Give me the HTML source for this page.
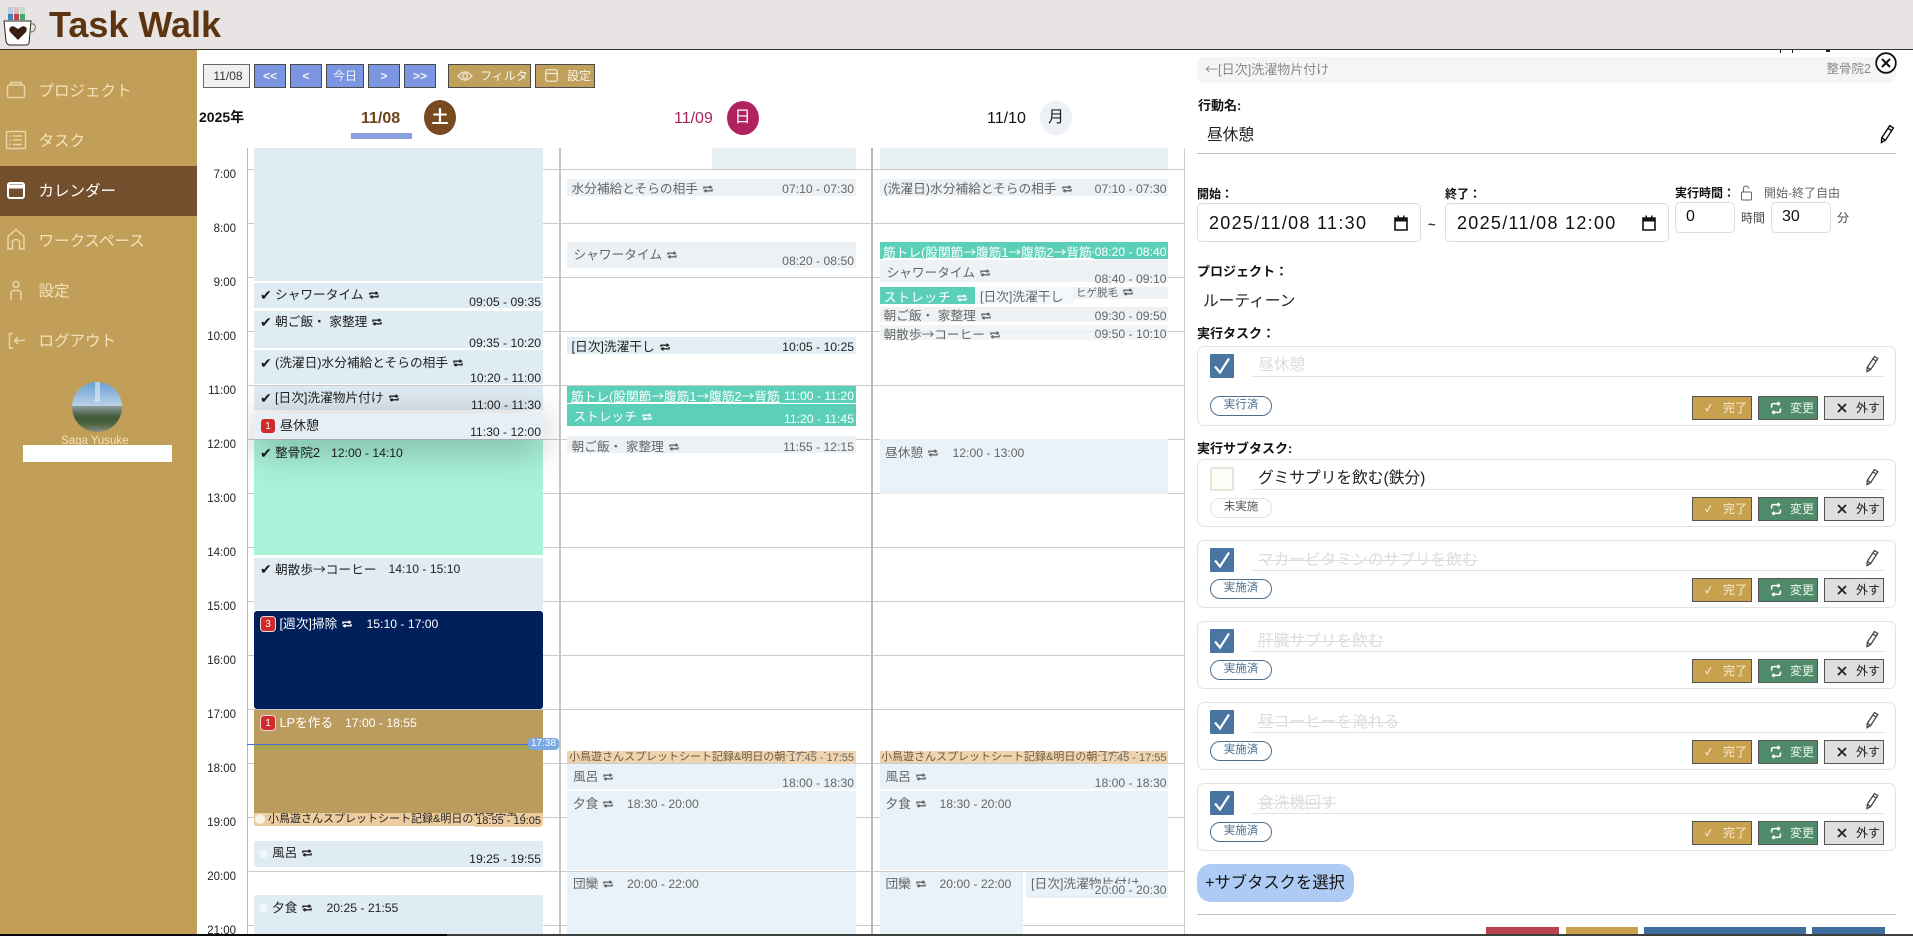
<!DOCTYPE html>
<html lang="ja"><head><meta charset="utf-8"><title>Task Walk</title>
<style>
*{box-sizing:border-box}
html,body{margin:0;padding:0;width:1913px;height:936px;overflow:hidden;background:#fff}
body{position:relative;font-family:"Liberation Sans","Noto Sans CJK JP",sans-serif;color:#222}
.a{position:absolute;white-space:nowrap;line-height:16px}
.b{position:absolute}
.j{font-family:"Noto Sans CJK JP",sans-serif}
.l{position:absolute;left:248px;width:936px;height:1px;background:#cbcbcb}
.h{position:absolute;right:1677px;font-size:11.5px;line-height:16px;color:#222}
.e{position:absolute}
.t{position:absolute;white-space:nowrap;line-height:16px;font-size:12.7px}
.c{position:absolute;white-space:nowrap;line-height:16px;font-size:14px;left:260px;color:#1a1a1a}
.m{position:absolute;white-space:nowrap;line-height:16px;font-size:12.2px}
.d2{color:#666}.d3{color:#666}
.r{width:10px;height:8px;margin-left:5px;vertical-align:0}
.nav{position:absolute;left:0;width:197px;height:50px}
.nav span{position:absolute;left:38.500px;top:16px;font-size:15.5px;line-height:20px;color:#f3e3bb;white-space:nowrap}
.nav svg{position:absolute;left:5px;top:9px;width:22px;height:32px;fill:none;stroke:#e9d6a8;stroke-width:1.5}
.tb{position:absolute;top:64px;height:24px;border:1px solid #4a4a4a;font-size:12px;line-height:22px;text-align:center;color:#f4f4f4;background:#7b95e1}
.tb.g{background:#c0a05a}
.lb{position:absolute;white-space:nowrap;font-weight:700;line-height:16px;color:#111}
.inp{position:absolute;border:1px solid #dcdcdc;border-radius:5px;background:#fff}
.dt{position:absolute;left:11px;top:8px;font-size:18px;letter-spacing:1.3px;line-height:22px;color:#111;white-space:nowrap}
.card{position:absolute;left:1197px;width:699px;height:68px;border:1px solid #e3e3e3;border-radius:7px;background:#fff}
.chk{position:absolute;left:12px;top:7px;width:24px;height:24px;background:#4a75a3;border-radius:1px}
.chk svg{position:absolute;left:0;top:0;width:24px;height:24px}
.chk.o{background:#fdfdf8;border:2px solid #e7e4d8}
.nm{position:absolute;left:60px;top:10px;font-size:15.7px;line-height:20px;color:#dcdcdc;white-space:nowrap;text-decoration:line-through}
.ul{position:absolute;left:54px;top:29px;width:632px;height:1px;background:#e2e2e2}
.pn{position:absolute;left:667px;top:8px;width:14px;height:18px;color:#444}
.pill{position:absolute;left:12px;top:38px;width:62px;height:20px;border:1px solid #4e6f8c;border-radius:10px;font-size:11.5px;line-height:17px;text-align:center;color:#4a7090;background:#fff}
.pill.o{border-color:#e2e2e2;color:#555}
.btn{position:absolute;top:37px;width:60px;height:24px;border:1px solid #555;font-size:12px;line-height:22px}
.btn i{position:absolute;font-style:normal;white-space:nowrap}
.bc{left:494px;background:#c8a14f;color:#f8ecd0}
.bh{left:560px;background:#4f8a69;color:#eaf5ee;width:60px}
.bx{left:626px;background:#dedede;color:#222}
.badge{position:absolute;width:16px;height:16px;border-radius:4px;background:#d12a2a;border:1px solid #f5d5d5;color:#fff;font-size:10px;line-height:15px;text-align:center}
</style></head><body>
<svg width="0" height="0" style="position:absolute"><defs>
<symbol id="rep" viewBox="0 0 11 8"><path d="M1 4.200V2h8M7.200.4 9.400 2 7.200 3.600M10 3.800V6H2M3.800 4.400 1.600 6l2.200 1.600" fill="none" stroke="currentColor" stroke-width="1.400"/></symbol>
<symbol id="pen" viewBox="0 0 14 18"><path d="M9.500 1.500 12.800 3.600 5.600 14.600 2 16.600 2.300 12.400ZM8 4 11.200 6M2.300 12.400 5.600 14.600" fill="none" stroke="currentColor" stroke-width="1.300"/></symbol>
<symbol id="ck" viewBox="0 0 24 24"><path d="M5 12.500 10 18.500 19 4.500" fill="none" stroke="#fff" stroke-width="2.200"/></symbol>
<symbol id="cal" viewBox="0 0 14 16"><path d="M1 3h12v12H1z" fill="none" stroke="#111" stroke-width="1.600"/><path d="M1 3h12v3.500H1zM3.500 0.500h1.500V3H3.500zM9 0.500h1.500V3H9z" fill="#111"/></symbol>
<symbol id="sy" viewBox="0 0 16 16"><path d="M3 7.500V5Q3 3 5 3h6M10 1l2 2-2 2" fill="none" stroke="#fff" stroke-width="1.800"/><path d="M13 8.500V11Q13 13 11 13H5M6 15l-2-2 2-2" fill="none" stroke="#fff" stroke-width="1.800"/></symbol>
<symbol id="x" viewBox="0 0 12 12"><path d="M2 2l8 8M10 2l-8 8" fill="none" stroke="#222" stroke-width="1.800"/></symbol>
</defs></svg>

<!-- header -->
<div class="b" style="left:0;top:0;width:1913px;height:49px;background:#e8e4e4"></div>
<div class="b" style="left:0;top:49px;width:1913px;height:1px;background:#3b3530"></div>
<svg class="b" style="left:0;top:3px" width="42" height="44" viewBox="0 0 42 44">
<rect x="8" y="4" width="5" height="8" fill="#b7cfe0"/><rect x="14" y="4" width="5" height="8" fill="#e4bcc0"/><rect x="20" y="4" width="5" height="8" fill="#bfe0cc"/>
<rect x="8" y="11" width="5" height="6" fill="#3f86bb"/><rect x="14" y="11" width="5" height="6" fill="#c9404d"/><rect x="20" y="11" width="5" height="6" fill="#48a878"/>
<path d="M4 18H31L29 40Q28.500 42 26 42H10Q7 42 6 38Z" fill="#fff" stroke="#2d2620" stroke-width="1"/>
<path d="M31 21h3q2 2 1 5t-5 3" fill="none" stroke="#8a8278" stroke-width="1.200"/>
<path d="M18 37 10 29C8 25.500 11 22.500 14 23.500L18 26 22 23.500C25.500 22.500 28 25.500 26 29Z" fill="#3a2012"/>
</svg>
<div class="a" style="left:49px;top:4px;font-size:36px;line-height:42px;font-weight:700;color:#5c3410">Task Walk</div>

<!-- sidebar -->
<div class="b" style="left:0;top:50px;width:197px;height:886px;background:#c19f58"></div>
<div class="b" style="left:0;top:166px;width:197px;height:50px;background:#744f2e"></div>
<div class="nav" style="top:66px"><svg viewBox="0 0 22 32"><rect x="2.500" y="10" width="17" height="12.500" rx="2"/><path d="M6 10V7.500h10V10"/></svg><span>プロジェクト</span></div>
<div class="nav" style="top:116px"><svg viewBox="0 0 22 32"><rect x="1.500" y="6.500" width="19" height="17" rx="1.500"/><path d="M8 11h9M8 15h9M8 19.500h9M4.500 11h1.500M4.500 15h1.500M4.500 19.500h1.500"/></svg><span>タスク</span></div>
<div class="nav" style="top:166px"><svg viewBox="0 0 22 32" style="stroke:#fff;stroke-width:2"><rect x="3" y="8" width="16" height="15" rx="2"/><path d="M3 11.500h16" stroke-width="4"/></svg><span style="color:#fff">カレンダー</span></div>
<div class="nav" style="top:216px"><svg viewBox="0 0 22 32"><path d="M3 24V11.500L11 4.500 19 11.500V24H14.500V17.500Q14.500 14.500 11 14.500T7.500 17.500V24Z"/></svg><span>ワークスペース</span></div>
<div class="nav" style="top:266px"><svg viewBox="0 0 22 32"><circle cx="11" cy="9.500" r="3"/><path d="M6 25V18Q6 15.500 8.500 15.500h5Q16 15.500 16 18V25"/></svg><span>設定</span></div>
<div class="nav" style="top:316px"><svg viewBox="0 0 22 32"><path d="M8 8.500H4.500V23H8M20 15.500H9.500M13 12l-3.500 3.500L13 19"/></svg><span>ログアウト</span></div>
<svg class="b" style="left:72px;top:382px" width="50" height="50" viewBox="0 0 50 50">
<defs><clipPath id="av"><ellipse cx="25" cy="25" rx="25" ry="25"/></clipPath><linearGradient id="sk" x1="0" y1="0" x2="0" y2="1"><stop offset="0" stop-color="#6aa0d2"/><stop offset="1" stop-color="#c7dcec"/></linearGradient>
<linearGradient id="gr" x1="0" y1="0" x2="0" y2="1"><stop offset="0" stop-color="#8d9aa0"/><stop offset=".22" stop-color="#66786a"/><stop offset=".45" stop-color="#3d5a33"/><stop offset=".7" stop-color="#4e6440"/><stop offset="1" stop-color="#8a8f80"/></linearGradient></defs>
<g clip-path="url(#av)"><rect width="50" height="28" fill="url(#sk)"/><rect x="23" y="0" width="5" height="20" fill="#e6eef5" opacity=".6"/><rect y="24" width="50" height="26" fill="url(#gr)"/></g></svg>
<div class="a" style="left:61px;top:433px;font-size:11.5px;color:#f3e3bb">Saga Yusuke</div>
<div class="b" style="left:23px;top:445px;width:149px;height:17px;background:#fff"></div>

<!-- toolbar -->
<div class="tb" style="left:203px;width:47px;background:#f0f0f0;color:#333;padding-left:3px;border-color:#666">11/08</div>
<div class="tb" style="left:254px;width:32px;font-weight:700">&lt;&lt;</div>
<div class="tb" style="left:290px;width:32px;font-weight:700">&lt;</div>
<div class="tb" style="left:326px;width:38px">今日</div>
<div class="tb" style="left:368px;width:32px;font-weight:700">&gt;</div>
<div class="tb" style="left:404px;width:32px;font-weight:700">&gt;&gt;</div>
<div class="tb g" style="left:448px;width:83px;text-align:left;padding-left:31px"><svg class="b" style="left:8px;top:4px" width="16" height="14" viewBox="0 0 16 14"><path d="M1 7Q8 -1 15 7 8 15 1 7Z" fill="none" stroke="#f4efe0" stroke-width="1.200"/><circle cx="8" cy="7" r="2.300" fill="none" stroke="#f4efe0" stroke-width="1.200"/></svg>フィルタ</div>
<div class="tb g" style="left:535px;width:60px;text-align:left;padding-left:31px"><svg class="b" style="left:9px;top:4px" width="13" height="13" viewBox="0 0 13 13"><rect x=".8" y=".8" width="11.400" height="11.400" rx="1.500" fill="none" stroke="#f4efe0" stroke-width="1.200"/><path d="M1 4.500h11" stroke="#f4efe0" stroke-width="1.200"/></svg>設定</div>

<div class="a" style="left:199px;top:109px;font-size:14px;font-weight:700;color:#111">2025年</div>
<div class="a" style="left:361px;top:111px;font-size:16px;font-weight:700;color:#6a4418">11/08</div>
<div class="b" style="left:351px;top:133px;width:61px;height:6px;background:#8aa0de"></div>
<div class="b" style="left:424px;top:100px;width:32px;height:35px;border-radius:50%;background:#774a1f;color:#fff;font-size:17px;font-weight:700;line-height:35px;text-align:center">土</div>
<div class="a" style="left:674px;top:111px;font-size:16px;color:#a8235f">11/09</div>
<div class="b" style="left:726.500px;top:101px;width:32px;height:34px;border-radius:50%;background:#b0235f;color:#fff;font-size:16px;line-height:34px;text-align:center">日</div>
<div class="a" style="left:987px;top:111px;font-size:16px;color:#111">11/10</div>
<div class="b" style="left:1040px;top:101px;width:32px;height:34px;border-radius:50%;background:#eef0f7;color:#222;font-size:16px;line-height:34px;text-align:center">月</div>

<!-- grid -->
<div class="l" style="top:169px"></div><div class="l" style="top:223px"></div><div class="l" style="top:277px"></div><div class="l" style="top:331px"></div><div class="l" style="top:385px"></div><div class="l" style="top:439px"></div><div class="l" style="top:493px"></div><div class="l" style="top:547px"></div><div class="l" style="top:601px"></div><div class="l" style="top:655px"></div><div class="l" style="top:709px"></div><div class="l" style="top:763px"></div><div class="l" style="top:817px"></div><div class="l" style="top:871px"></div><div class="l" style="top:925px"></div>
<div class="b" style="left:247px;top:148px;width:1px;height:786px;background:#b9b9b9"></div>
<div class="b" style="left:559px;top:148px;width:2px;height:786px;background:#c4c4c4"></div>
<div class="b" style="left:871px;top:148px;width:2px;height:786px;background:#b8b8b8"></div>
<div class="b" style="left:1184px;top:148px;width:1px;height:786px;background:#cfcfcf"></div>
<div class="h" style="top:167px">7:00</div><div class="h" style="top:221px">8:00</div><div class="h" style="top:275px">9:00</div><div class="h" style="top:329px">10:00</div><div class="h" style="top:383px">11:00</div><div class="h" style="top:437px">12:00</div><div class="h" style="top:491px">13:00</div><div class="h" style="top:545px">14:00</div><div class="h" style="top:599px">15:00</div><div class="h" style="top:653px">16:00</div><div class="h" style="top:707px">17:00</div><div class="h" style="top:761px">18:00</div><div class="h" style="top:815px">19:00</div><div class="h" style="top:869px">20:00</div><div class="h" style="top:923px">21:00</div>

<!-- day 1 -->
<div class="e" style="left:254px;top:148px;width:289px;height:133px;background:#e0ecf3"></div>
<div class="e" style="left:254px;top:283px;width:289px;height:25px;background:#e0ecf3"></div>
<div class="e" style="left:254px;top:311px;width:289px;height:37px;background:#e0ecf3"></div>
<div class="e" style="left:254px;top:350px;width:289px;height:34px;background:#e0ecf3"></div>
<div class="e" style="left:254px;top:386px;width:289px;height:24px;background:#e0ecf3"></div>
<div class="e" style="left:254px;top:440px;width:289px;height:115px;background:#a9f3d9"></div>
<div class="e" style="left:254px;top:558px;width:289px;height:52px;background:#e0ebf3"></div>
<div class="e" style="left:254px;top:611px;width:289px;height:98px;background:#001f5b;border-radius:3px"></div>
<div class="e" style="left:254px;top:710px;width:289px;height:103px;background:#bb9c5e"></div>
<div class="e" style="left:254px;top:744px;width:289px;height:6px;background:#a9a050"></div>
<div class="e" style="left:254px;top:813px;width:289px;height:13px;background:#edcd9f;border-radius:0 0 2px 2px"></div>
<div class="e" style="left:254px;top:841px;width:289px;height:26px;background:#e0ecf3;border-radius:2px"></div>
<div class="e" style="left:254px;top:895px;width:289px;height:40px;background:#e0ecf3;border-radius:2px"></div>
<span class="c" style="top:287px">✔</span><span class="t" style="left:275px;top:287px">シャワータイム<svg class="r"><use href="#rep"/></svg></span><span class="m" style="right:1372px;top:294px">09:05 - 09:35</span>
<span class="c" style="top:314px">✔</span><span class="t" style="left:275px;top:314px">朝ご飯・ 家整理<svg class="r"><use href="#rep"/></svg></span><span class="m" style="right:1372px;top:335px">09:35 - 10:20</span>
<span class="c" style="top:355px">✔</span><span class="t" style="left:275px;top:355px">(洗濯日)水分補給とそらの相手<svg class="r"><use href="#rep"/></svg></span><span class="m" style="right:1372px;top:370px">10:20 - 11:00</span>
<span class="c" style="top:390px">✔</span><span class="t" style="left:275px;top:390px">[日次]洗濯物片付け<svg class="r"><use href="#rep"/></svg></span><span class="m" style="right:1372px;top:397px">11:00 - 11:30</span>
<span class="c" style="top:445px">✔</span><span class="t" style="left:275px;top:445px">整骨院2</span><span class="m" style="left:331px;top:445px">12:00 - 14:10</span>
<span class="c" style="top:561px">✔</span><span class="t" style="left:275px;top:561px">朝散歩<span class="j">→</span>コーヒー</span><span class="m" style="left:388.500px;top:561px">14:10 - 15:10</span>
<div class="badge" style="left:260px;top:616px">3</div><span class="t" style="left:279.500px;top:616px;color:#fff">[週次]掃除<svg class="r"><use href="#rep"/></svg></span><span class="m" style="left:366.500px;top:616px;color:#fff">15:10 - 17:00</span>
<div class="badge" style="left:260px;top:715px">1</div><span class="t" style="left:279.500px;top:715px;color:#fff">LPを作る</span><span class="m" style="left:345px;top:715px;color:#fff">17:00 - 18:55</span>
<div class="b" style="left:255px;top:814px;width:10px;height:10px;border-radius:50%;background:#f8f4e8"></div>
<div class="e" style="left:268px;top:811px;width:272px;height:16px;overflow:hidden"><span class="t" style="left:0;top:0;font-size:11px">小鳥遊さんスプレットシート記録&amp;明日の朝予定書く</span></div><span class="m" style="right:1372px;top:816px;font-size:11px;line-height:11px;padding-left:2px;background:#edcd9f">18:55 - 19:05</span>
<div class="b" style="left:259px;top:849px;width:9px;height:9px;border-radius:50%;background:#f1f6fa"></div><span class="t" style="left:272px;top:845px">風呂<svg class="r"><use href="#rep"/></svg></span><span class="m" style="right:1372px;top:851px">19:25 - 19:55</span>
<div class="b" style="left:259px;top:903px;width:9px;height:9px;border-radius:50%;background:#f1f6fa"></div><span class="t" style="left:272px;top:900px">夕食<svg class="r"><use href="#rep"/></svg></span><span class="m" style="left:326.500px;top:900px">20:25 - 21:55</span>
<!-- selected -->
<div class="e" style="left:254px;top:413px;width:289px;height:26px;background:#e6eff5;box-shadow:0 8px 40px rgba(0,0,0,.34);clip-path:inset(-40px -17px -70px -6px)"></div>
<div class="badge" style="left:260px;top:418px;border-color:#e6eff5">1</div><span class="t" style="left:280px;top:418px;font-size:13px">昼休憩</span><span class="m" style="right:1372px;top:424px">11:30 - 12:00</span>
<!-- now line -->
<div class="b" style="left:247px;top:744px;width:290px;height:1px;background:#4a6fd4"></div>
<div class="b" style="left:528px;top:738px;width:31px;height:12px;border-radius:4px;background:#7ba8e2;color:#fff;font-size:10px;line-height:12px;text-align:center">17:38</div>

<!-- day 2 -->
<div class="e" style="left:712px;top:148px;width:144px;height:21px;background:#e8f0f4"></div>
<div class="e" style="left:567px;top:179px;width:289px;height:17px;background:#ebf1f5"></div>
<div class="e" style="left:567px;top:242px;width:289px;height:26px;background:#ebf1f5"></div>
<div class="e" style="left:567px;top:337px;width:289px;height:17px;background:#e2edf4"></div>
<div class="e" style="left:567px;top:386px;width:289px;height:17px;background:#5ccfb8"></div>
<div class="e" style="left:567px;top:404px;width:289px;height:22px;background:#5ccfb8"></div>
<div class="e" style="left:567px;top:436px;width:289px;height:17px;background:#ebf1f5"></div>
<div class="e" style="left:567px;top:751px;width:289px;height:12px;background:#efd4ae"></div>
<div class="e" style="left:567px;top:764px;width:289px;height:25px;background:#e9f2f8"></div>
<div class="e" style="left:567px;top:791px;width:289px;height:79px;background:#e9f2f8"></div>
<div class="e" style="left:567px;top:872px;width:289px;height:62px;background:#e9f2f8"></div>
<span class="t d2" style="left:571.500px;top:181px">水分補給とそらの相手<svg class="r"><use href="#rep"/></svg></span><span class="m d2" style="right:1059px;top:181px">07:10 - 07:30</span>
<span class="t d2" style="left:573.500px;top:247px">シャワータイム<svg class="r"><use href="#rep"/></svg></span><span class="m d2" style="right:1059px;top:253px">08:20 - 08:50</span>
<span class="t" style="left:571.500px;top:339px">[日次]洗濯干し<svg class="r"><use href="#rep"/></svg></span><span class="m" style="right:1059px;top:339px">10:05 - 10:25</span>
<div class="e" style="left:571px;top:388px;width:209px;height:17px;overflow:hidden"><span class="t" style="left:0;top:0;color:#fff;text-decoration:underline">筋トレ(股関節<span class="j">→</span>腹筋1<span class="j">→</span>腹筋2<span class="j">→</span>背筋<span class="j">→</span></span></div><span class="m" style="right:1059px;top:388px;color:#fff">11:00 - 11:20</span>
<span class="t" style="left:573.500px;top:409px;color:#fff">ストレッチ<svg class="r"><use href="#rep"/></svg></span><span class="m" style="right:1059px;top:411px;color:#fff">11:20 - 11:45</span>
<span class="t d2" style="left:571.500px;top:439px">朝ご飯・ 家整理<svg class="r"><use href="#rep"/></svg></span><span class="m d2" style="right:1059px;top:439px">11:55 - 12:15</span>
<div class="e" style="left:569px;top:749px;width:286px;height:16px;overflow:hidden"><span class="t" style="left:0;top:0;font-size:11px;color:#6a5a40">小鳥遊さんスプレットシート記録&amp;明日の朝予定書く</span></div><span class="m d2" style="right:1059px;top:753px;font-size:11px;line-height:11px;padding-left:2px;background:#efd4ae">17:45 - 17:55</span>
<span class="t d2" style="left:573px;top:769px">風呂<svg class="r"><use href="#rep"/></svg></span><span class="m d2" style="right:1059px;top:775px">18:00 - 18:30</span>
<span class="t d2" style="left:573px;top:796px">夕食<svg class="r"><use href="#rep"/></svg></span><span class="m d2" style="left:627px;top:796px">18:30 - 20:00</span>
<span class="t d2" style="left:573px;top:876px">団欒<svg class="r"><use href="#rep"/></svg></span><span class="m d2" style="left:627px;top:876px">20:00 - 22:00</span>

<!-- day 3 -->
<div class="e" style="left:880px;top:148px;width:288px;height:21px;background:#e8f0f4"></div>
<div class="e" style="left:880px;top:179px;width:288px;height:17px;background:#ebf1f5"></div>
<div class="e" style="left:880px;top:242px;width:288px;height:17px;background:#5ccfb8"></div>
<div class="e" style="left:880px;top:260px;width:288px;height:22px;background:#eef2f5"></div>
<div class="e" style="left:880px;top:287px;width:95px;height:17px;background:#5ccfb8"></div>
<div class="e" style="left:975px;top:287px;width:98px;height:17px;background:#f5f8fa"></div>
<div class="e" style="left:1073px;top:287px;width:95px;height:12px;background:#eef2f5"></div>
<div class="e" style="left:880px;top:307px;width:288px;height:15px;background:#eef2f5"></div>
<div class="e" style="left:880px;top:325px;width:288px;height:15px;background:#eef2f5;opacity:.8"></div>
<div class="e" style="left:880px;top:439px;width:288px;height:55px;background:#e9f2f8"></div>
<div class="e" style="left:880px;top:751px;width:288px;height:12px;background:#efd4ae"></div>
<div class="e" style="left:880px;top:764px;width:288px;height:25px;background:#e9f2f8"></div>
<div class="e" style="left:880px;top:791px;width:288px;height:79px;background:#e9f2f8"></div>
<div class="e" style="left:880px;top:872px;width:143px;height:62px;background:#e9f2f8"></div>
<div class="e" style="left:1026px;top:872px;width:142px;height:26px;background:#e9f2f8"></div>
<span class="t d3" style="left:883.500px;top:181px">(洗濯日)水分補給とそらの相手<svg class="r"><use href="#rep"/></svg></span><span class="m d3" style="right:746.500px;top:181px">07:10 - 07:30</span>
<div class="e" style="left:883px;top:244px;width:211px;height:17px;overflow:hidden"><span class="t" style="left:0;top:0;color:#fff;text-decoration:underline">筋トレ(股関節<span class="j">→</span>腹筋1<span class="j">→</span>腹筋2<span class="j">→</span>背筋<span class="j">→</span></span></div><span class="m" style="right:746.500px;top:244px;color:#fff">08:20 - 08:40</span>
<span class="t d3" style="left:886.500px;top:265px">シャワータイム<svg class="r"><use href="#rep"/></svg></span><span class="m d3" style="right:746.500px;top:271px">08:40 - 09:10</span>
<span class="t" style="left:883.500px;top:290px;color:#fff;font-size:13px;letter-spacing:.6px">ストレッチ<svg class="r"><use href="#rep"/></svg></span>
<div class="e" style="left:980px;top:288px;width:93px;height:17px;overflow:hidden"><span class="t d3" style="left:0;top:1px">[日次]洗濯干し</span></div>
<span class="t d3" style="left:1076px;top:285px;font-size:10.500px">ヒゲ脱毛<svg class="r"><use href="#rep"/></svg></span>
<span class="t d3" style="left:883.500px;top:308px">朝ご飯・ 家整理<svg class="r"><use href="#rep"/></svg></span><span class="m d3" style="right:746.500px;top:308px">09:30 - 09:50</span>
<span class="t d3" style="left:883.500px;top:326px">朝散歩<span class="j">→</span>コーヒー<svg class="r"><use href="#rep"/></svg></span><span class="m d3" style="right:746.500px;top:326px">09:50 - 10:10</span>
<span class="t d3" style="left:885px;top:445px">昼休憩<svg class="r"><use href="#rep"/></svg></span><span class="m d3" style="left:952.500px;top:445px">12:00 - 13:00</span>
<div class="e" style="left:881px;top:749px;width:286px;height:16px;overflow:hidden"><span class="t" style="left:0;top:0;font-size:11px;color:#6a5a40">小鳥遊さんスプレットシート記録&amp;明日の朝予定書く</span></div><span class="m d3" style="right:746.500px;top:753px;font-size:11px;line-height:11px;padding-left:2px;background:#efd4ae">17:45 - 17:55</span>
<span class="t d3" style="left:885.500px;top:769px">風呂<svg class="r"><use href="#rep"/></svg></span><span class="m d3" style="right:746.500px;top:775px">18:00 - 18:30</span>
<span class="t d3" style="left:885.500px;top:796px">夕食<svg class="r"><use href="#rep"/></svg></span><span class="m d3" style="left:939.500px;top:796px">18:30 - 20:00</span>
<span class="t d3" style="left:885.500px;top:876px">団欒<svg class="r"><use href="#rep"/></svg></span><span class="m d3" style="left:939.500px;top:876px">20:00 - 22:00</span>
<div class="e" style="left:1031px;top:876px;width:136px;height:16px;overflow:hidden"><span class="t d3" style="left:0;top:0">[日次]洗濯物片付け</span></div><span class="m d3" style="right:746.500px;top:884px;line-height:12px;padding-left:2px;background:#e9f2f8">20:00 - 20:30</span>

<!-- detail panel -->
<div class="b" style="left:1780px;top:50px;width:1px;height:3px;background:#222"></div><div class="b" style="left:1792px;top:50px;width:1px;height:3px;background:#222"></div><div class="b" style="left:1826px;top:50px;width:4px;height:2px;background:#222"></div>
<div class="b" style="left:1197px;top:57px;width:699px;height:26px;background:#f4f5f6;border-radius:7px"></div>
<div class="a" style="left:1205px;top:61px;font-size:13px;color:#8a8a8a"><span class="j">←</span>[日次]洗濯物片付け</div>
<div class="a" style="right:42px;top:61px;font-size:12.5px;color:#8a8a8a">整骨院2</div>
<svg class="b" style="left:1875px;top:52px" width="22" height="22" viewBox="0 0 22 22"><circle cx="11" cy="11" r="9.800" fill="#fff" stroke="#111" stroke-width="1.800"/><path d="M7 7l8 8M15 7l-8 8" stroke="#111" stroke-width="2"/></svg>
<div class="lb" style="left:1198px;top:98px;font-size:13px">行動名:</div>
<div class="a" style="left:1207px;top:128px;font-size:15.7px;color:#222">昼休憩</div>
<svg class="b" style="left:1879px;top:124px;color:#111" width="16" height="20"><use href="#pen"/></svg>
<div class="b" style="left:1197px;top:153px;width:699px;height:1px;background:#bdbdbd"></div>

<div class="lb" style="left:1197px;top:186px;font-size:12px">開始：</div>
<div class="lb" style="left:1445px;top:186px;font-size:12px">終了：</div>
<div class="lb" style="left:1675px;top:185px;font-size:12px">実行時間：</div>
<svg class="b" style="left:1740px;top:185px" width="13" height="16" viewBox="0 0 13 16"><rect x="1.500" y="7" width="10" height="8" rx="1" fill="none" stroke="#666" stroke-width="1"/><path d="M3.500 7V3.500Q3.500 1 6 1T8.500 3.500" fill="none" stroke="#666"/></svg>
<div class="a" style="left:1764px;top:185px;font-size:12px;color:#666">開始-終了自由</div>

<div class="inp" style="left:1197px;top:203px;width:224px;height:39px"><div class="dt">2025/11/08 11:30</div><svg class="b" style="left:196px;top:11px" width="14" height="16"><use href="#cal"/></svg></div>
<div class="a" style="left:1428px;top:217px;font-size:13px;font-weight:700;color:#333">~</div>
<div class="inp" style="left:1445px;top:203px;width:224px;height:39px"><div class="dt">2025/11/08 12:00</div><svg class="b" style="left:196px;top:11px" width="14" height="16"><use href="#cal"/></svg></div>
<div class="inp" style="left:1675px;top:202px;width:60px;height:31px"><div class="dt" style="left:10px;top:3px;font-size:16px;letter-spacing:0">0</div></div>
<div class="a" style="left:1741px;top:210px;font-size:12px;color:#444">時間</div>
<div class="inp" style="left:1771px;top:202px;width:60px;height:31px"><div class="dt" style="left:10px;top:3px;font-size:16px;letter-spacing:0">30</div></div>
<div class="a" style="left:1837px;top:210px;font-size:12px;color:#444">分</div>

<div class="lb" style="left:1197px;top:264px;font-size:13px">プロジェクト：</div>
<div class="a" style="left:1203px;top:294px;font-size:15.7px;color:#222">ルーティーン</div>
<div class="lb" style="left:1197px;top:326px;font-size:13px">実行タスク：</div>

<!-- task card -->
<div class="card" style="top:346px;height:80px">
<div class="chk"><svg><use href="#ck"/></svg></div><div class="nm" style="top:9px;text-decoration:none">昼休憩</div><div class="ul"></div><svg class="pn"><use href="#pen"/></svg>
<div class="pill" style="top:49px">実行済</div>
<div class="btn bc" style="top:49px"><i style="left:12px;top:0;font-size:9px;font-weight:700">✓</i><i style="left:30px">完了</i></div>
<div class="btn bh" style="top:49px"><svg class="b" style="left:10px;top:4px" width="14" height="14"><use href="#sy"/></svg><i style="left:31px">変更</i></div>
<div class="btn bx" style="top:49px"><svg class="b" style="left:11px;top:5px" width="12" height="12"><use href="#x"/></svg><i style="left:31px">外す</i></div>
</div>

<div class="lb" style="left:1197px;top:441px;font-size:13px">実行サブタスク:</div>

<div class="card" style="top:459px">
<div class="chk o"></div><div class="nm" style="top:9px;color:#222;text-decoration:none">グミサプリを飲む(鉄分)</div><div class="ul"></div><svg class="pn"><use href="#pen"/></svg>
<div class="pill o">未実施</div>
<div class="btn bc"><i style="left:12px;top:0;font-size:9px;font-weight:700">✓</i><i style="left:30px">完了</i></div>
<div class="btn bh"><svg class="b" style="left:10px;top:4px" width="14" height="14"><use href="#sy"/></svg><i style="left:31px">変更</i></div>
<div class="btn bx"><svg class="b" style="left:11px;top:5px" width="12" height="12"><use href="#x"/></svg><i style="left:31px">外す</i></div>
</div>
<div class="card" style="top:540px">
<div class="chk"><svg><use href="#ck"/></svg></div><div class="nm">マカービタミンのサプリを飲む</div><div class="ul"></div><svg class="pn"><use href="#pen"/></svg>
<div class="pill">実施済</div>
<div class="btn bc"><i style="left:12px;top:0;font-size:9px;font-weight:700">✓</i><i style="left:30px">完了</i></div>
<div class="btn bh"><svg class="b" style="left:10px;top:4px" width="14" height="14"><use href="#sy"/></svg><i style="left:31px">変更</i></div>
<div class="btn bx"><svg class="b" style="left:11px;top:5px" width="12" height="12"><use href="#x"/></svg><i style="left:31px">外す</i></div>
</div>
<div class="card" style="top:621px">
<div class="chk"><svg><use href="#ck"/></svg></div><div class="nm">肝臓サプリを飲む</div><div class="ul"></div><svg class="pn"><use href="#pen"/></svg>
<div class="pill">実施済</div>
<div class="btn bc"><i style="left:12px;top:0;font-size:9px;font-weight:700">✓</i><i style="left:30px">完了</i></div>
<div class="btn bh"><svg class="b" style="left:10px;top:4px" width="14" height="14"><use href="#sy"/></svg><i style="left:31px">変更</i></div>
<div class="btn bx"><svg class="b" style="left:11px;top:5px" width="12" height="12"><use href="#x"/></svg><i style="left:31px">外す</i></div>
</div>
<div class="card" style="top:702px">
<div class="chk"><svg><use href="#ck"/></svg></div><div class="nm">昼コーヒーを淹れる</div><div class="ul"></div><svg class="pn"><use href="#pen"/></svg>
<div class="pill">実施済</div>
<div class="btn bc"><i style="left:12px;top:0;font-size:9px;font-weight:700">✓</i><i style="left:30px">完了</i></div>
<div class="btn bh"><svg class="b" style="left:10px;top:4px" width="14" height="14"><use href="#sy"/></svg><i style="left:31px">変更</i></div>
<div class="btn bx"><svg class="b" style="left:11px;top:5px" width="12" height="12"><use href="#x"/></svg><i style="left:31px">外す</i></div>
</div>
<div class="card" style="top:783px">
<div class="chk"><svg><use href="#ck"/></svg></div><div class="nm">食洗機回す</div><div class="ul"></div><svg class="pn"><use href="#pen"/></svg>
<div class="pill">実施済</div>
<div class="btn bc"><i style="left:12px;top:0;font-size:9px;font-weight:700">✓</i><i style="left:30px">完了</i></div>
<div class="btn bh"><svg class="b" style="left:10px;top:4px" width="14" height="14"><use href="#sy"/></svg><i style="left:31px">変更</i></div>
<div class="btn bx"><svg class="b" style="left:11px;top:5px" width="12" height="12"><use href="#x"/></svg><i style="left:31px">外す</i></div>
</div>

<div class="b" style="left:1197px;top:864px;width:157px;height:38px;background:#aecbf5;border-radius:14px;color:#111;font-size:16.300px;line-height:39px;padding-left:8px;white-space:nowrap">+サブタスクを選択</div>
<div class="b" style="left:1197px;top:914px;width:699px;height:1px;background:#bdbdbd"></div>
<div class="b" style="left:1486px;top:927px;width:73px;height:8px;background:#b8434f"></div>
<div class="b" style="left:1566px;top:927px;width:72px;height:8px;background:#c9a14f"></div>
<div class="b" style="left:1644px;top:927px;width:162px;height:8px;background:#3f6e9e"></div>
<div class="b" style="left:1812px;top:927px;width:73px;height:8px;background:#3f6e9e"></div>

<!-- bottom edge -->
<div class="b" style="left:0;top:934px;width:1913px;height:2px;background:#3c3f3c"></div>
<div class="b" style="left:0;top:934px;width:447px;height:2px;background:#0a0a0a"></div>
</body></html>
